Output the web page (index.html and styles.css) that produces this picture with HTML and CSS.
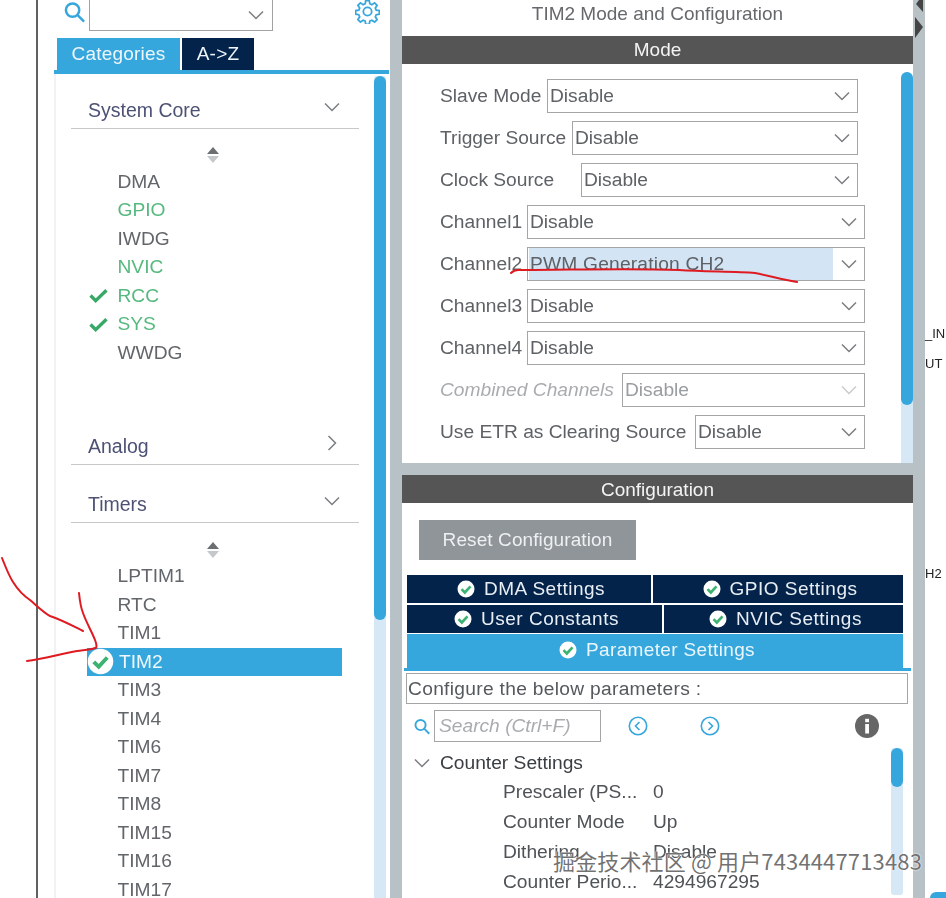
FILE: index.html
```html
<!DOCTYPE html>
<html lang="en">
<head>
<meta charset="utf-8">
<title>TIM2 Mode and Configuration</title>
<link rel="stylesheet" href="styles.css">
</head>
<body>
<svg class="defs" width="0" height="0" aria-hidden="true">
  <symbol id="chev" viewBox="0 0 16 10"><path d="M1 1.5 8 8.5 15 1.5" fill="none" stroke="currentColor" stroke-width="1.5"/></symbol>
  <symbol id="lens" viewBox="0 0 22 22"><circle cx="9" cy="9" r="7" fill="none" stroke="#36a7dc" stroke-width="2.6"/><path d="M14 14 21 21" stroke="#36a7dc" stroke-width="2.6" fill="none"/></symbol>
  <symbol id="sort" viewBox="0 0 12 16"><path d="M6 0 12 7H0z" fill="#6b6f72"/><path d="M0 9H12L6 16z" fill="#c4c8ca"/></symbol>
  <symbol id="ok" viewBox="0 0 18 18"><circle cx="9" cy="9" r="8.5" fill="#fff"/><path d="M4.5 9.2 7.8 12.5 13.5 6.3" fill="none" stroke="#3cb371" stroke-width="2.6"/></symbol>
  <symbol id="tick" viewBox="0 0 20 16"><path d="M1.5 8 7 13.5 18.5 2.5" fill="none" stroke="#37a866" stroke-width="3.6"/></symbol>
</svg>
<div class="app">
  <div class="margin"></div>
  <aside class="left">
    <div class="search-row">
      <svg class="lens"><use href="#lens"/></svg>
      <div class="combo"><svg class="chev"><use href="#chev"/></svg></div>
      <svg class="gear" viewBox="0 0 24 24"><path d="M10.3 1.5h3.4l.5 3 2 .9 2.6-1.7 2.4 2.4-1.7 2.6.9 2 3 .5v3.4l-3 .5-.9 2 1.7 2.6-2.4 2.4-2.6-1.7-2 .9-.5 3h-3.4l-.5-3-2-.9-2.6 1.7-2.4-2.4 1.7-2.6-.9-2-3-.5v-3.4l3-.5.9-2-1.7-2.6 2.4-2.4 2.6 1.7 2-.9z" fill="none" stroke="#36a7dc" stroke-width="1.7"/><circle cx="12" cy="12" r="4" fill="none" stroke="#36a7dc" stroke-width="1.7"/></svg>
    </div>
    <div class="tabs">
      <div class="tab tab-on">Categories</div>
      <div class="tab tab-off">A-&gt;Z</div>
    </div>
    <div class="tree-wrap">
      <div class="tree">
        <div class="head"><span>System Core</span><svg class="chev"><use href="#chev"/></svg></div>
        <svg class="sort"><use href="#sort"/></svg>
        <ul class="items">
          <li class="item"><i class="slot"></i>DMA</li>
          <li class="item green"><i class="slot"></i>GPIO</li>
          <li class="item"><i class="slot"></i>IWDG</li>
          <li class="item green"><i class="slot"></i>NVIC</li>
          <li class="item green"><i class="slot"><svg class="tick"><use href="#tick"/></svg></i>RCC</li>
          <li class="item green"><i class="slot"><svg class="tick"><use href="#tick"/></svg></i>SYS</li>
          <li class="item"><i class="slot"></i>WWDG</li>
        </ul>
        <div class="head head-analog"><span>Analog</span><svg class="chev chev-right"><use href="#chev"/></svg></div>
        <div class="head head-timers"><span>Timers</span><svg class="chev"><use href="#chev"/></svg></div>
        <svg class="sort sort-timers"><use href="#sort"/></svg>
        <ul class="items">
          <li class="item"><i class="slot"></i>LPTIM1</li>
          <li class="item"><i class="slot"></i>RTC</li>
          <li class="item"><i class="slot"></i>TIM1</li>
          <li class="item selected"><i class="slot"><svg class="ok-big"><use href="#ok"/></svg></i>TIM2</li>
          <li class="item"><i class="slot"></i>TIM3</li>
          <li class="item"><i class="slot"></i>TIM4</li>
          <li class="item"><i class="slot"></i>TIM6</li>
          <li class="item"><i class="slot"></i>TIM7</li>
          <li class="item"><i class="slot"></i>TIM8</li>
          <li class="item"><i class="slot"></i>TIM15</li>
          <li class="item"><i class="slot"></i>TIM16</li>
          <li class="item"><i class="slot"></i>TIM17</li>
        </ul>
      </div>
      <div class="sbar sbar-left"><div class="thumb"></div></div>
    </div>
  </aside>
  <div class="divider"></div>
  <main class="right">
    <section class="mode">
      <div class="title">TIM2 Mode and Configuration</div>
      <div class="bar">Mode</div>
      <div class="mode-body">
        <form class="form">
          <div class="row short"><label>Slave Mode</label><div class="sel w311">Disable<svg class="chev"><use href="#chev"/></svg></div></div>
          <div class="row short"><label>Trigger Source</label><div class="sel w286">Disable<svg class="chev"><use href="#chev"/></svg></div></div>
          <div class="row short"><label>Clock Source</label><div class="sel w277">Disable<svg class="chev"><use href="#chev"/></svg></div></div>
          <div class="row"><label>Channel1</label><div class="sel w338">Disable<svg class="chev"><use href="#chev"/></svg></div></div>
          <div class="row"><label>Channel2</label><div class="sel w338"><span class="hl">PWM Generation CH2</span><svg class="chev"><use href="#chev"/></svg></div></div>
          <div class="row"><label>Channel3</label><div class="sel w338">Disable<svg class="chev"><use href="#chev"/></svg></div></div>
          <div class="row"><label>Channel4</label><div class="sel w338">Disable<svg class="chev"><use href="#chev"/></svg></div></div>
          <div class="row off"><label>Combined Channels</label><div class="sel w243">Disable<svg class="chev"><use href="#chev"/></svg></div></div>
          <div class="row"><label>Use ETR as Clearing Source</label><div class="sel w170">Disable<svg class="chev"><use href="#chev"/></svg></div></div>
        </form>
        <div class="sbar sbar-mode"><div class="thumb"></div></div>
      </div>
    </section>
    <section class="config">
      <div class="bar">Configuration</div>
      <button class="reset" type="button">Reset Configuration</button>
      <div class="cfg-tabs">
        <div class="cfg-row cols-a">
          <div class="cfg-tab"><svg class="ok"><use href="#ok"/></svg>DMA Settings</div>
          <div class="cfg-tab"><svg class="ok"><use href="#ok"/></svg>GPIO Settings</div>
        </div>
        <div class="cfg-row cols-b">
          <div class="cfg-tab"><svg class="ok"><use href="#ok"/></svg>User Constants</div>
          <div class="cfg-tab"><svg class="ok"><use href="#ok"/></svg>NVIC Settings</div>
        </div>
        <div class="cfg-tab cfg-active"><svg class="ok"><use href="#ok"/></svg>Parameter Settings</div>
      </div>
      <div class="cfg-line"></div>
      <div class="note">Configure the below parameters :</div>
      <div class="tools">
        <svg class="lens-sm"><use href="#lens"/></svg>
        <div class="find">Search (Ctrl+F)</div>
        <svg class="nav nav-prev" viewBox="0 0 20 20"><circle cx="10" cy="10" r="8.7" fill="none" stroke="#36a7dc" stroke-width="1.6"/><path d="M11.5 6 7.5 10l4 4" fill="none" stroke="#36a7dc" stroke-width="1.6"/></svg>
        <svg class="nav nav-next" viewBox="0 0 20 20"><circle cx="10" cy="10" r="8.7" fill="none" stroke="#36a7dc" stroke-width="1.6"/><path d="M8.5 6l4 4-4 4" fill="none" stroke="#36a7dc" stroke-width="1.6"/></svg>
        <svg class="info" viewBox="0 0 24 24"><circle cx="12" cy="12" r="12" fill="#666"/><rect x="10.2" y="10" width="3.8" height="9.5" fill="#fff"/><rect x="10.2" y="4.8" width="3.8" height="3.4" fill="#fff"/></svg>
      </div>
      <div class="params">
        <div class="param-list">
          <div class="group"><svg class="chev"><use href="#chev"/></svg>Counter Settings</div>
          <div class="param"><span>Prescaler (PS...</span><span>0</span></div>
          <div class="param"><span>Counter Mode</span><span>Up</span></div>
          <div class="param"><span>Dithering</span><span>Disable</span></div>
          <div class="param"><span>Counter Perio...</span><span>4294967295</span></div>
        </div>
        <div class="sbar sbar-param"><div class="thumb"></div></div>
      </div>
    </section>
  </main>
  <div class="divider">
    <svg class="handle" viewBox="0 0 10 40"><path d="M9 0V12L2 4 5 0z" fill="#444"/><path d="M1 17 9 27 1 38z" fill="#444"/></svg>
  </div>
  <div class="canvas">
    <span class="pin pin-in">_IN</span>
    <span class="pin pin-ut">UT</span>
    <span class="pin pin-h2">H2</span>
    <div class="blob"></div>
  </div>
</div>
<svg class="ink" viewBox="0 0 946 898" aria-hidden="true">
  <path d="M2 558C6 568 9 576 13 582 18 590 24 596 30 600 37 606 44 613 50 616 62 620 73 626 83 631"/>
  <path d="M79 593C80 603 81 608 83 613 87 624 92 632 95 640 97 645 97 648 95 648 90 650 84 650 77 651 60 654 43 659 27 661"/>
  <path d="M511 273C513 271 515 270 518 270 570 270 625 268 679 270 705 272 735 271 755 273 770 276 785 280 797 282"/>
</svg>
<div class="mark">掘金技术社区 @ 用户7434447713483</div>
</body>
</html>
```
FILE: styles.css
```css
* { box-sizing: border-box; }
html, body { margin: 0; padding: 0; }
body { width: 946px; height: 898px; overflow: hidden; position: relative; background: #fff; font-family: "Liberation Sans", Arial, sans-serif; font-size: 19.2px; color: #5e6266; }
.defs { position: absolute; }
.app { display: flex; height: 898px; filter: blur(.35px); }
.margin { width: 38px; flex: none; border-right: 2px solid #5f6163; background: #fff; }
.left { width: 352px; flex: none; background: #fff; display: flex; flex-direction: column; height: 898px; }
.search-row { height: 38px; display: flex; align-items: flex-start; position: relative; padding-left: 26px; flex: none; }
.lens { width: 21px; height: 22px; margin-top: 1px; }
.combo { width: 184px; height: 31px; margin-left: 4px; border: 1.5px solid #a2a2a2; border-top: 0; display: flex; align-items: center; justify-content: flex-end; padding-right: 8px; color: #666; }
.gear { width: 25px; height: 25px; margin-left: 82px; margin-top: -1px; }
.chev { width: 16px; height: 10px; flex: none; color: #7a7e81; }
.tabs { display: flex; gap: 2px; height: 32px; margin-left: 19px; flex: none; }
.tab { display: flex; align-items: center; justify-content: center; color: #eef6fb; letter-spacing: .2px; font-size: 19px; }
.tab-on { width: 123px; background: #36a7dc; }
.tab-off { width: 72px; background: #03234b; }
.tree-wrap { flex: 1; min-height: 0; display: grid; grid-template-columns: 320px 12px; margin-left: 16px; width: 335px; border-top: 4px solid #36a7dc; overflow: hidden; }
.tree { border-left: 2px solid #f0f2f3; padding-left: 15px; padding-top: 18px; }
.head { height: 36.5px; width: 288px; border-bottom: 1.5px solid #c6c8ca; display: flex; justify-content: space-between; align-items: flex-start; padding: 6px 19px 0 17px; color: #4d5275; font-size: 19.5px; line-height: 24px; }
.head .chev { margin-top: 4px; }
.chev-right { transform: rotate(-90deg); }
.head-analog { margin-top: 61px; }
.head-timers { margin-top: 21.5px; }
.sort { display: block; width: 12px; height: 16px; margin: 18px 0 5px 136px; }
.sort-timers { margin: 19px 0 4.5px 136px; }
.items { list-style: none; margin: 0; padding: 0; margin-left: 16px; width: 255px; }
.item { height: 28.5px; display: flex; align-items: center; color: #62666a; }
.slot { width: 30.5px; flex: none; display: flex; align-items: center; padding-left: 2px; }
.green { color: #56b97f; }
.tick { width: 19px; height: 15px; }
.selected { background: #36a7dc; color: #eef8fd; }
.selected .slot { width: 32px; padding-left: 0; }
.ok-big { width: 27px; height: 27px; }
.sbar { background: #d6e7f6; border-radius: 3px; }
.thumb { background: #36a7dc; border-radius: 6px; width: 100%; }
.sbar-left { margin-top: 2px; }
.sbar-left .thumb { height: 544px; }
.right { width: 511px; flex: none; background: #b8c2c6; display: flex; flex-direction: column; height: 898px; }
.mode { height: 463px; background: #fff; display: flex; flex-direction: column; flex: none; }
.title { height: 36px; display: flex; align-items: center; justify-content: center; padding-bottom: 9px; font-size: 19px; color: #66696c; }
.bar { height: 28px; background: #555; color: #f4f4f4; font-size: 19px; display: flex; align-items: center; justify-content: center; flex: none; }
.mode-body { flex: 1; display: grid; grid-template-columns: 1fr 12px; min-height: 0; }
.form { padding: 15px 0 0 38px; display: flex; flex-direction: column; gap: 8px; }
.row { width: 425px; height: 34px; display: flex; justify-content: space-between; align-items: center; }
.short { padding-right: 7px; }
.sel { height: 34px; border: 1.5px solid #a3a5a7; display: flex; align-items: center; justify-content: space-between; padding-left: 2px; padding-right: 7px; background: #fff; flex: none; }
.w311 { width: 311px; } .w286 { width: 286px; } .w277 { width: 277px; } .w338 { width: 338px; } .w243 { width: 243px; } .w170 { width: 170px; }
.hl { background: #d3e4f5; align-self: stretch; flex: 1; margin: 0 8px 0 -1px; padding-left: 1px; display: flex; align-items: center; letter-spacing: .2px; }
.off { color: #a9acae; }
.off label { font-style: italic; }
.off .sel { color: #9a9da0; }
.off .chev { color: #c9cbcd; }
.sbar-mode { margin-top: 8px; background: #d6e7f6; border-radius: 6px 6px 0 0; }
.sbar-mode .thumb { height: 333px; }
.config { margin-top: 12px; background: #fff; flex: 1; min-height: 0; display: flex; flex-direction: column; overflow: hidden; }
.config > .bar { padding-top: 1px; }
.reset { width: 217px; height: 40px; margin: 17px 0 15px 17px; background: #8f9599; color: #eef0f1; border: 0; font: inherit; font-size: 19px; letter-spacing: .1px; flex: none; padding: 0; }
.cfg-tabs { margin-left: 5px; width: 496px; display: flex; flex-direction: column; gap: 2px; flex: none; }
.cfg-row { display: grid; gap: 2px; height: 28px; }
.cols-a { grid-template-columns: 244px 250px; }
.cols-b { grid-template-columns: 255px 239px; }
.cfg-tab { background: #03234b; color: #e8eef3; display: flex; align-items: center; justify-content: center; gap: 9px; letter-spacing: .5px; font-size: 19px; padding-left: 4px; }
.cfg-active { background: #36a7dc; height: 34px; margin-top: -1px; padding-bottom: 3px; color: #eaf6fc; letter-spacing: .35px; }
.ok { width: 18px; height: 18px; flex: none; }
.cfg-line { height: 3px; background: #36a7dc; margin: 0 2px; flex: none; }
.note { margin: 2px 5px 0 4px; height: 31px; border: 1.5px solid #a3a5a7; display: flex; align-items: center; padding-left: 1px; flex: none; color: #55595d; letter-spacing: .3px; }
.tools { height: 32px; margin-top: 6px; display: flex; align-items: center; padding-left: 12px; flex: none; }
.lens-sm { width: 16px; height: 17px; }
.find { width: 167px; height: 32px; margin-left: 4px; border: 1.5px solid #a3a5a7; display: flex; align-items: center; padding-left: 4px; font-style: italic; color: #a9acae; }
.nav { width: 20px; height: 20px; }
.nav-prev { margin-left: 27px; }
.nav-next { margin-left: 52px; }
.info { width: 24px; height: 24px; margin-left: 135px; }
.params { flex: 1; min-height: 0; margin-top: 6px; display: grid; grid-template-columns: 489px 12px; }
.param-list { overflow: hidden; }
.group { height: 29px; display: flex; align-items: center; padding-left: 12px; gap: 10px; color: #3a3e42; }
.param { height: 30px; display: flex; align-items: center; padding-left: 101px; color: #4f5357; }
.param span:first-child { width: 150px; flex: none; }
.sbar-param { margin-bottom: 3px; }
.sbar-param .thumb { height: 39px; }
.divider { width: 12px; flex: none; background: #b8c2c6; }
.handle { display: block; width: 10px; height: 40px; margin-left: 1px; }
.canvas { flex: 1; position: relative; background: #fff; color: #222; font-size: 13px; }
.pin { position: absolute; left: 0; line-height: 14px; }
.pin-in { top: 327px; }
.pin-ut { top: 357px; }
.pin-h2 { top: 567px; }
.blob { position: absolute; left: 5px; top: 892px; width: 16px; height: 6px; background: #36a7dc; border-radius: 6px 0 0 0; }
.ink { position: absolute; left: 0; top: 0; width: 946px; height: 898px; pointer-events: none; }
.ink path { fill: none; stroke: #df1b22; stroke-width: 2; stroke-linecap: round; }
.mark { position: absolute; left: 553px; top: 847px; font-family: "Noto Sans CJK SC", "Liberation Sans", sans-serif; font-size: 22px; letter-spacing: .15px; line-height: 26px; color: rgba(50,50,50,.7); text-shadow: 0 0 2px #fff, 0 0 1px #fff; white-space: nowrap; }
```
